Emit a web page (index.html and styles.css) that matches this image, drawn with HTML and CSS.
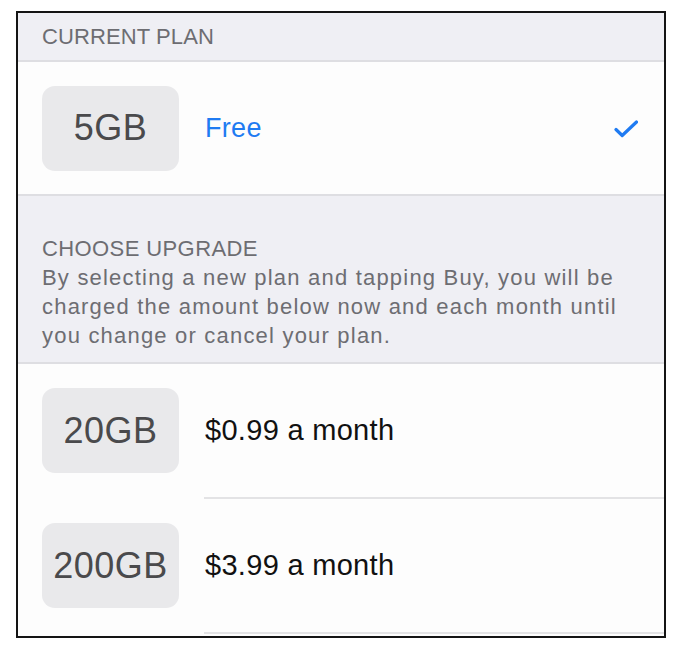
FILE: index.html
```html
<!DOCTYPE html>
<html lang="en">
<head>
<meta charset="utf-8">
<title>Storage Plan</title>
<link rel="stylesheet" href="styles.css">
</head>
<body>
<div class="frame">
  <div class="section-header">CURRENT PLAN</div>
  <div class="group">
    <div class="row">
      <div class="badge">5GB</div>
      <div class="label label-current">Free</div>
      <svg class="check" width="24" height="18" viewBox="0 0 24 18" aria-hidden="true">
        <path d="M2 9.5 L8.2 15.5 L22.5 2" fill="none" stroke="#1f7bf2" stroke-width="3.2" stroke-linecap="round" stroke-linejoin="round"/>
      </svg>
    </div>
  </div>
  <div class="section-info">
    <div class="info-title">CHOOSE UPGRADE</div>
    <div class="info-text">By selecting a new plan and tapping Buy, you will be charged the amount below now and each month until you change or cancel your plan.</div>
  </div>
  <div class="list">
    <div class="row row-item">
      <div class="badge">20GB</div>
      <div class="label">$0.99 a month</div>
    </div>
    <div class="row row-item">
      <div class="badge">200GB</div>
      <div class="label">$3.99 a month</div>
    </div>
  </div>
</div>
</body>
</html>
```

FILE: styles.css
```css
html, body {
  margin: 0;
  padding: 0;
  background: #ffffff;
}

body {
  font-family: "Liberation Sans", Arial, Helvetica, sans-serif;
}

.frame {
  box-sizing: border-box;
  width: 650px;
  height: 627px;
  margin: 11px 0 0 16px;
  border: 2px solid #141414;
  background: #fdfdfd;
  overflow: hidden;
}

.section-header {
  height: 47px;
  display: flex;
  align-items: center;
  padding: 0 24px;
  background: #efeff4;
  border-bottom: 2px solid #dedee2;
  color: #6d6d72;
  font-size: 22px;
  letter-spacing: 0.1px;
}

.group {
  border-bottom: 2px solid #dedee2;
}

.row {
  display: flex;
  align-items: center;
  height: 132px;
  padding: 0 26px 0 24px;
  gap: 26px;
}

.badge {
  flex: none;
  width: 137px;
  height: 85px;
  border-radius: 13px;
  background: #e9e9eb;
  color: #4a4a4c;
  font-size: 36px;
  letter-spacing: 0.5px;
  display: flex;
  align-items: center;
  justify-content: center;
}

.label {
  flex: 1;
  color: #111111;
  font-size: 29px;
  letter-spacing: 0.3px;
}

.label-current {
  color: #1f7bf2;
  font-size: 27px;
  letter-spacing: 0.3px;
}

.check {
  flex: none;
  display: block;
  margin-top: 2px;
}

.section-info {
  height: 168px;
  box-sizing: border-box;
  padding: 38px 24px 0;
  background: #efeff4;
  border-bottom: 2px solid #dedee2;
  color: #6d6d72;
  font-size: 22px;
  line-height: 29px;
}

.info-title {
  letter-spacing: 0.4px;
}

.info-text {
  letter-spacing: 1.2px;
}

.row-item {
  height: 135px;
  box-sizing: border-box;
  padding-bottom: 2px;
  background: linear-gradient(#e3e3e5, #e3e3e5) no-repeat right bottom / calc(100% - 186px) 2px;
}
```
